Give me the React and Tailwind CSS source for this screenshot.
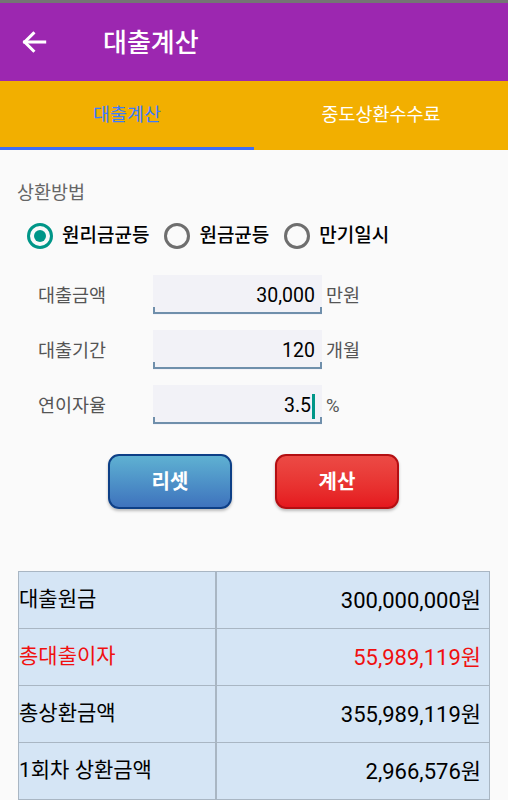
import React, { useState } from 'react';

const FONT = { fontFamily: 'Roboto, "Noto Sans CJK KR", sans-serif' };

const Radio = ({ checked, label, onClick }) => (
  <button type="button" onClick={onClick} className="flex items-center gap-[9px]">
    <span
      className={`w-[26px] h-[26px] rounded-full border-[3px] flex items-center justify-center ${checked ? 'border-[#009688]' : 'border-[#6e6e6e]'}`}
    >
      {checked && <span className="w-[12px] h-[12px] rounded-full bg-[#009688]" />}
    </span>
    <span className="text-[19px] font-medium text-black leading-[30px]">{label}</span>
  </button>
);

const Field = ({ label, value, unit, focused }) => (
  <div className="flex items-center h-[40px]">
    <div className="w-[153px] pl-[38px] pt-[3px] text-[18.5px] text-[#555] shrink-0">{label}</div>
    <div className="relative w-[169px] h-[40px] bg-[#f2f2f7] flex items-center justify-end pr-[7px] pt-[2px]">
      <span className="text-[19.5px] text-black leading-none">{value}</span>
      {focused && <span className="w-[3px] h-[25px] bg-[#009688] ml-[1px]" />}
      {/* android style underline */}
      <span className="absolute left-0 right-0 bottom-[1px] h-[2px] bg-[#6f8fab]" />
      <span className="absolute left-0 bottom-[1px] w-[2px] h-[7px] bg-[#6f8fab]" />
      <span className="absolute right-0 bottom-[1px] w-[2px] h-[7px] bg-[#6f8fab]" />
    </div>
    <div className="pl-[4px] pt-[3px] text-[18.5px] text-[#555]">{unit}</div>
  </div>
);

const rows = [
  { label: '대출원금', value: '300,000,000원' },
  { label: '총대출이자', value: '55,989,119원', red: true },
  { label: '총상환금액', value: '355,989,119원' },
  { label: '1회차 상환금액', value: '2,966,576원' },
];

export default function App() {
  const [method, setMethod] = useState(0);
  const [tab, setTab] = useState(0);

  return (
    <div className="w-[508px] h-[800px] overflow-hidden bg-[#fafafa]" style={FONT}>
      <div className="h-[3px] bg-[#747474]" />
      {/* app bar */}
      <div className="h-[78px] bg-[#9c27b0] flex items-center">
        <svg width="32" height="32" viewBox="0 0 24 24" className="ml-[18px]" fill="none" stroke="white" strokeWidth="2.3" strokeLinecap="square">
          <path d="M20 12H5" />
          <path d="M11.5 5.5L5 12l6.5 6.5" />
        </svg>
        <div className="ml-[53px] pt-[2px] text-[26px] font-medium text-white">대출계산</div>
      </div>

      {/* tabs */}
      <div className="h-[69px] bg-[#f2af00] flex">
        {['대출계산', '중도상환수수료'].map((t, i) => (
          <button
            key={t}
            type="button"
            onClick={() => setTab(i)}
            className="flex-1 relative flex items-center justify-center"
          >
            <span className={`text-[18.5px] ${tab === i ? 'text-[#3b7bff]' : 'text-white'}`}>{t}</span>
            {tab === i && <span className="absolute left-0 right-0 bottom-0 h-[3px] bg-[#3f6ef5]" />}
          </button>
        ))}
      </div>

      {/* form */}
      <div>
        <div className="mt-[31px] pl-[17px] text-[18.5px] text-[#666] leading-[24px] h-[24px]">상환방법</div>
        <div className="flex items-center gap-[15px] pl-[27px] mt-[16px] h-[30px]">
          <Radio checked={method === 0} label="원리금균등" onClick={() => setMethod(0)} />
          <Radio checked={method === 1} label="원금균등" onClick={() => setMethod(1)} />
          <Radio checked={method === 2} label="만기일시" onClick={() => setMethod(2)} />
        </div>

        <div className="mt-[24px] flex flex-col gap-[15px]">
          <Field label="대출금액" value="30,000" unit="만원" />
          <Field label="대출기간" value="120" unit="개월" />
          <Field label="연이자율" value="3.5" unit="%" focused />
        </div>

        <div className="flex mt-[29px] pl-[108px] gap-[43px]">
          <button
            type="button"
            className="w-[124px] h-[55px] rounded-[11px] border-2 border-[#0d3f86] bg-gradient-to-b from-[#5fb1d2] to-[#3f73bd] text-white text-[20px] font-bold shadow-[0_2px_3px_rgba(0,0,0,0.25)]"
          >
            리셋
          </button>
          <button
            type="button"
            className="w-[124px] h-[55px] rounded-[11px] border-2 border-[#b30f12] bg-gradient-to-b from-[#ec4a45] to-[#e5171e] text-white text-[20px] font-bold shadow-[0_2px_3px_rgba(0,0,0,0.25)]"
          >
            계산
          </button>
        </div>

        {/* result table */}
        <div className="mt-[62px] ml-[18px] w-[472px] border border-[#a9b6c3] bg-[#d5e5f5]">
          {rows.map((r, i) => (
            <div key={r.label} className={`flex ${i > 0 ? 'h-[57px] border-t border-[#a9b6c3]' : 'h-[56px]'}`}>
              <div className={`w-[198px] border-r-2 border-[#a9b6c3] flex items-center text-[21px] ${r.red ? 'text-[#f01010]' : 'text-black'}`}>
                {r.label}
              </div>
              <div className={`flex-1 flex items-center justify-end pr-[8px] text-[22px] ${r.red ? 'text-[#f01010]' : 'text-black'}`}>
                {r.value}
              </div>
            </div>
          ))}
        </div>
      </div>
    </div>
  );
}
